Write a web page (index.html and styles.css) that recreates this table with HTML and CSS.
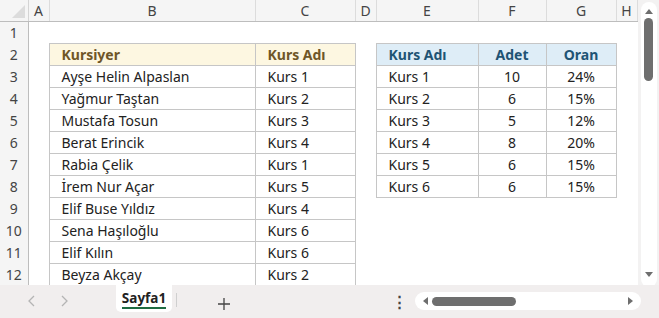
FILE: index.html
```html
<!DOCTYPE html>
<html lang="tr">
<head>
    <meta charset="UTF-8">
    <title>Sayfa1</title>
    <link rel="stylesheet" href="styles.css">
</head>
<body>
    <div class="app">
        <div class="sheet">
            <table class="grid">
                <colgroup>
                    <col style="width:28px">
                    <col style="width:21px">
                    <col style="width:206px">
                    <col style="width:100px">
                    <col style="width:21px">
                    <col style="width:102px">
                    <col style="width:68px">
                    <col style="width:70px">
                    <col style="width:21px">
                </colgroup>
                <tr class="head">
                    <td class="corner"><span class="tri"></span></td>
                    <td class="ch">A</td>
                    <td class="ch">B</td>
                    <td class="ch">C</td>
                    <td class="ch">D</td>
                    <td class="ch">E</td>
                    <td class="ch">F</td>
                    <td class="ch">G</td>
                    <td class="ch">H</td>
                </tr>
                <tr>
                    <td class="rh">1</td>
                    <td></td><td></td><td></td><td></td><td></td><td></td><td></td><td></td>
                </tr>
                <tr>
                    <td class="rh">2</td>
                    <td></td>
                    <td class="t1 t1h">Kursiyer</td>
                    <td class="t1 t1h">Kurs Adı</td>
                    <td></td>
                    <td class="t2 t2h">Kurs Adı</td>
                    <td class="t2 t2h num">Adet</td>
                    <td class="t2 t2h num">Oran</td>
                    <td></td>
                </tr>
                <tr>
                    <td class="rh">3</td>
                    <td></td>
                    <td class="t1">Ayşe Helin Alpaslan</td>
                    <td class="t1">Kurs 1</td>
                    <td></td>
                    <td class="t2">Kurs 1</td>
                    <td class="t2 num">10</td>
                    <td class="t2 num">24%</td>
                    <td></td>
                </tr>
                <tr>
                    <td class="rh">4</td>
                    <td></td>
                    <td class="t1">Yağmur Taştan</td>
                    <td class="t1">Kurs 2</td>
                    <td></td>
                    <td class="t2">Kurs 2</td>
                    <td class="t2 num">6</td>
                    <td class="t2 num">15%</td>
                    <td></td>
                </tr>
                <tr>
                    <td class="rh">5</td>
                    <td></td>
                    <td class="t1">Mustafa Tosun</td>
                    <td class="t1">Kurs 3</td>
                    <td></td>
                    <td class="t2">Kurs 3</td>
                    <td class="t2 num">5</td>
                    <td class="t2 num">12%</td>
                    <td></td>
                </tr>
                <tr>
                    <td class="rh">6</td>
                    <td></td>
                    <td class="t1">Berat Erincik</td>
                    <td class="t1">Kurs 4</td>
                    <td></td>
                    <td class="t2">Kurs 4</td>
                    <td class="t2 num">8</td>
                    <td class="t2 num">20%</td>
                    <td></td>
                </tr>
                <tr>
                    <td class="rh">7</td>
                    <td></td>
                    <td class="t1">Rabia Çelik</td>
                    <td class="t1">Kurs 1</td>
                    <td></td>
                    <td class="t2">Kurs 5</td>
                    <td class="t2 num">6</td>
                    <td class="t2 num">15%</td>
                    <td></td>
                </tr>
                <tr>
                    <td class="rh">8</td>
                    <td></td>
                    <td class="t1">İrem Nur Açar</td>
                    <td class="t1">Kurs 5</td>
                    <td></td>
                    <td class="t2">Kurs 6</td>
                    <td class="t2 num">6</td>
                    <td class="t2 num">15%</td>
                    <td></td>
                </tr>
                <tr>
                    <td class="rh">9</td>
                    <td></td>
                    <td class="t1">Elif Buse Yıldız</td>
                    <td class="t1">Kurs 4</td>
                    <td></td><td></td><td></td><td></td><td></td>
                </tr>
                <tr>
                    <td class="rh">10</td>
                    <td></td>
                    <td class="t1">Sena Haşıloğlu</td>
                    <td class="t1">Kurs 6</td>
                    <td></td><td></td><td></td><td></td><td></td>
                </tr>
                <tr>
                    <td class="rh">11</td>
                    <td></td>
                    <td class="t1">Elif Kılın</td>
                    <td class="t1">Kurs 6</td>
                    <td></td><td></td><td></td><td></td><td></td>
                </tr>
                <tr>
                    <td class="rh">12</td>
                    <td></td>
                    <td class="t1">Beyza Akçay</td>
                    <td class="t1">Kurs 2</td>
                    <td></td><td></td><td></td><td></td><td></td>
                </tr>
            </table>

            <!-- vertical scrollbar -->
            <div class="vscroll">
                <div class="vtrack">
                    <svg class="arrow" width="10" height="8" viewBox="0 0 10 8"><path d="M1 7 L5 2 L9 7 Z" fill="#6e6e6e"/></svg>
                    <div class="vthumb"></div>
                    <div class="vspace"></div>
                    <svg class="arrow" width="10" height="8" viewBox="0 0 10 8"><path d="M1 1 L5 6 L9 1 Z" fill="#6e6e6e"/></svg>
                </div>
            </div>
        </div>

        <div class="tabbar">
            <div class="nav">
                <svg width="10" height="14" viewBox="0 0 10 14"><path d="M7 2 L2 7 L7 12" fill="none" stroke="#b4b4b4" stroke-width="1.3"/></svg>
                <svg width="10" height="14" viewBox="0 0 10 14"><path d="M3 2 L8 7 L3 12" fill="none" stroke="#b4b4b4" stroke-width="1.3"/></svg>
            </div>
            <div class="tab active"><span>Sayfa1</span></div>
            <div class="sep"></div>
            <div class="add">
                <svg width="14" height="14" viewBox="0 0 14 14"><path d="M7 1 V13 M1 7 H13" stroke="#444" stroke-width="1.3"/></svg>
            </div>
            <div class="more">⋮</div>
            <div class="hscroll">
                <svg width="8" height="10" viewBox="0 0 8 10"><path d="M7 1 L2 5 L7 9 Z" fill="#6e6e6e"/></svg>
                <div class="hthumb"></div>
                <div class="hspace"></div>
                <svg width="8" height="10" viewBox="0 0 8 10"><path d="M1 1 L6 5 L1 9 Z" fill="#6e6e6e"/></svg>
            </div>
        </div>
    </div>
</body>
</html>
```

FILE: styles.css
```css
body {
    margin: 0;
    font-family: 'Noto Sans', 'Open Sans', sans-serif;
    background: #fff;
    color: #222;
}
.app {
    width: 659px;
    height: 318px;
    overflow: hidden;
}
.sheet {
    display: flex;
    height: 285px;
    overflow: hidden;
}

/* cell grid */
.grid {
    border-collapse: collapse;
    table-layout: fixed;
    width: 637px;
    flex: none;
}
.grid tr {
    height: 22px;
}
.grid tr.head {
    height: 21px;
}
.grid td {
    padding: 0;
    font-size: 14px;
    white-space: nowrap;
    overflow: hidden;
    vertical-align: middle;
}
.corner {
    background: #f5f5f5;
    border-right: 1px solid #d4d4d4;
    border-bottom: 1px solid #bdbdbd;
    position: relative;
}
.tri {
    position: absolute;
    right: 3px;
    bottom: 3px;
    width: 0;
    height: 0;
    border-left: 13px solid transparent;
    border-bottom: 13px solid #dcdcdc;
}
.ch {
    background: #f5f5f5;
    color: #444;
    text-align: center;
    border-right: 1px solid #dcdcdc;
    border-bottom: 1px solid #bdbdbd;
    font-size: 14px;
}
.rh {
    background: #f5f5f5;
    color: #444;
    text-align: center;
    border-right: 1px solid #bdbdbd;
}

/* student list */
.t1 {
    border: 1px solid #c6c6c6;
    padding-left: 12px !important;
}
.t1h {
    background: #fdf7e1;
    color: #6f5628;
    font-weight: bold;
}

/* course summary */
.t2 {
    border: 1px solid #c6c6c6;
    padding-left: 12px !important;
}
.t2h {
    background: #deedf7;
    color: #1f5474;
    font-weight: bold;
}
.t2.num {
    text-align: center;
    padding-left: 0 !important;
}

/* scrollbar on the right */
.vscroll {
    width: 22px;
    background: #f3f2f2;
    padding: 2px 2px 0 3px;
    box-sizing: border-box;
}
.vtrack {
    height: 285px;
    background: #fff;
    border-radius: 8px;
    display: flex;
    flex-direction: column;
    align-items: center;
    padding: 5px 0 8px;
    box-sizing: border-box;
}
.vthumb {
    width: 9px;
    height: 63px;
    background: #6e6e6e;
    border-radius: 5px;
    margin-top: 3px;
}
.vspace {
    flex: 1;
}

/* sheet tabs */
.tabbar {
    height: 33px;
    background: #f1eeee;
    display: flex;
    align-items: flex-start;
}
.nav {
    display: flex;
    gap: 22px;
    padding: 9px 0 0 27px;
    width: 116px;
    flex: none;
    box-sizing: border-box;
}
.tab {
    width: 56px;
    height: 27px;
    flex: none;
    background: #fff;
    border-radius: 0 0 5px 5px;
    display: flex;
    justify-content: center;
    font-size: 13.5px;
    font-weight: bold;
    color: #222;
}
.tab span {
    padding-top: 4px;
    height: 18px;
    border-bottom: 2px solid #1d6b41;
    line-height: 18px;
}
.sep {
    width: 1px;
    height: 14px;
    flex: none;
    background: #cfcfcf;
    margin: 8px 0 0 4px;
}
.add {
    padding: 9px 0 0 40px;
    width: 80px;
    flex: none;
    box-sizing: border-box;
}
.more {
    font-size: 15px;
    color: #444;
    padding-top: 6px;
    width: 20px;
    flex: none;
    margin-left: 135px;
    font-weight: bold;
}
.hscroll {
    margin: 7px 0 0 3px;
    width: 226px;
    height: 18px;
    flex: none;
    background: #fff;
    border-radius: 9px;
    display: flex;
    align-items: center;
    padding: 0 6px;
    box-sizing: border-box;
    gap: 3px;
}
.hthumb {
    width: 84px;
    height: 9px;
    background: #6e6e6e;
    border-radius: 5px;
}
.hspace {
    flex: 1;
}
```
